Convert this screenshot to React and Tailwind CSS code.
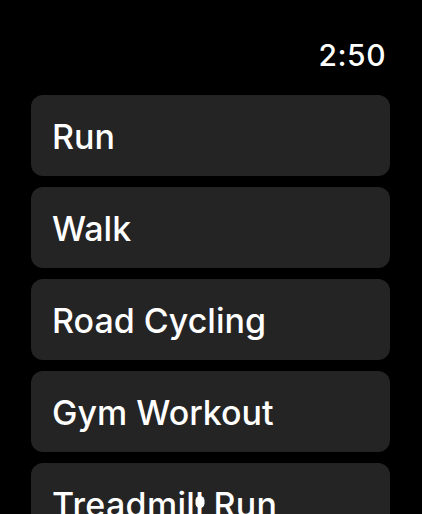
export default function App() {
  const items = ["Run", "Walk", "Road Cycling", "Gym Workout"];
  const font = { fontFamily: "Inter, 'Noto Sans', sans-serif" };
  return (
    <div className="w-[422px] h-[514px] bg-black overflow-hidden" style={font}>
      <div className="flex justify-end pr-[36px] pt-[37px] h-[95px]">
        <span className="text-white text-[30px] leading-[36px] font-medium tracking-[0.5px]">2:50</span>
      </div>
      <div className="flex flex-col gap-[11px] pl-[31px] pr-[32px]">
        {items.map((t) => (
          <div key={t} className="h-[81px] rounded-[12px] bg-[#242424] flex items-center pl-[21px] pt-[3px]">
            <span className="text-white text-[34px] leading-none font-medium">{t}</span>
          </div>
        ))}
        <div className="h-[81px] rounded-[12px] bg-[#242424] flex items-center pl-[21px] pt-[3px]">
          <span className="text-white text-[34px] leading-none font-medium tracking-[0.3px]">
            Treadmil
            <span className="relative">
              l
              <span className="absolute left-1/2 -translate-x-1/2 top-[12px] w-[9px] h-[12px] rounded-full bg-white"></span>
            </span>
            {" "}Run
          </span>
        </div>
      </div>
    </div>
  );
}
